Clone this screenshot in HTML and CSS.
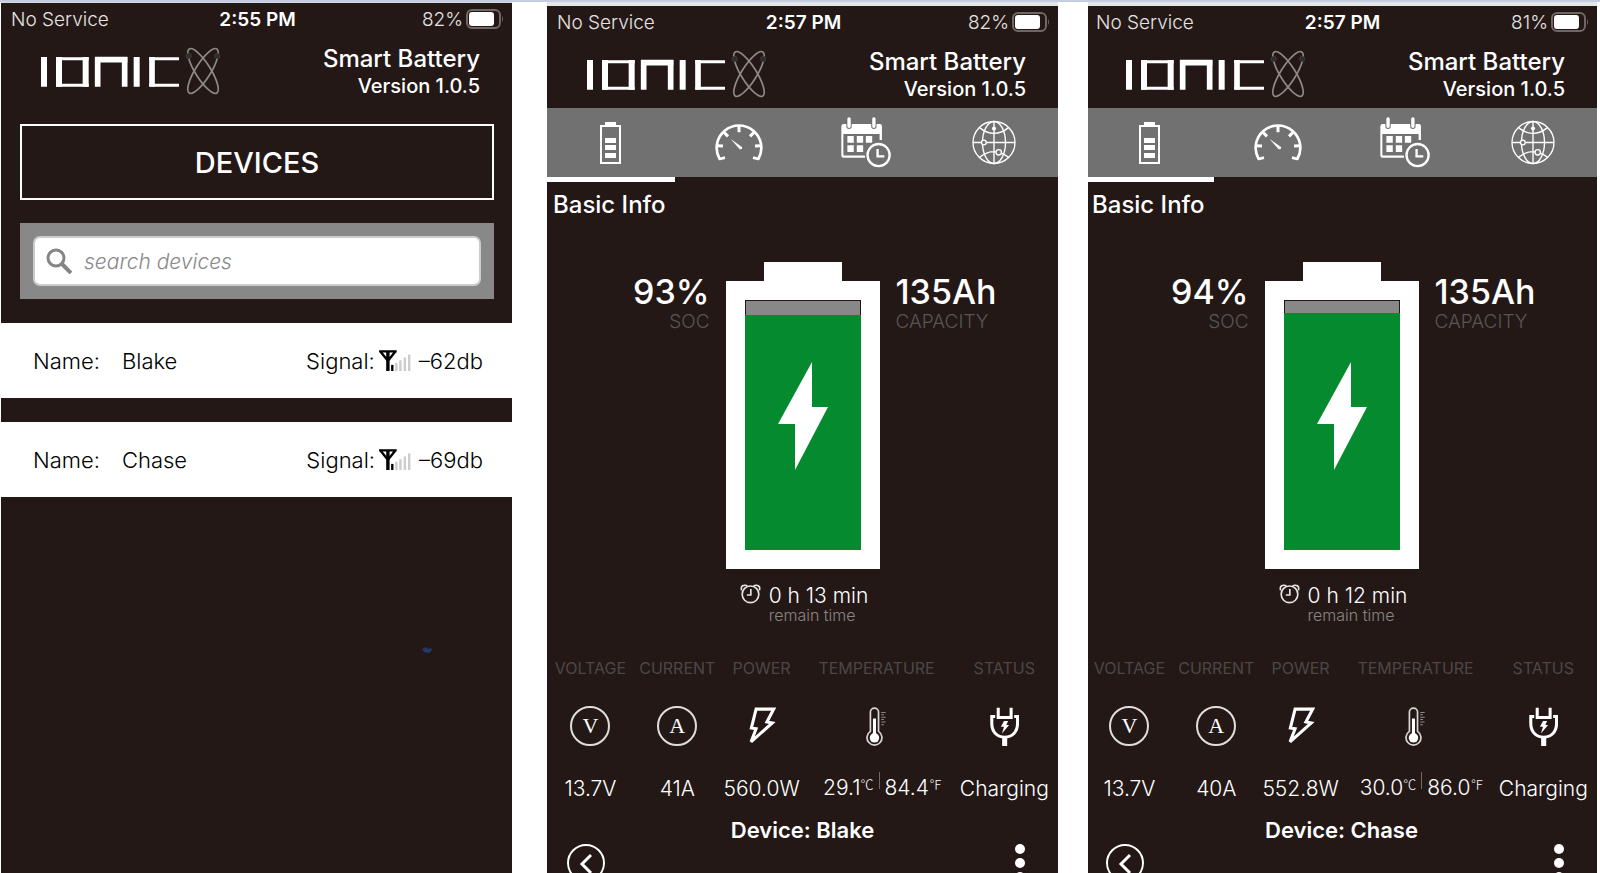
FILE: index.html
```html
<!DOCTYPE html>
<html lang="en">
<head>
    <meta charset="UTF-8">
    <meta name="viewport" content="width=device-width, initial-scale=1.0">
    <title>Ionic Smart Battery</title>
    <link rel="stylesheet" href="styles.css">
</head>
<body>

    <!-- Shared icons -->
    <svg class="sprite" aria-hidden="true">
        <symbol id="i-phone-battery" viewBox="0 0 38 20">
            <rect x="1" y="1" width="33" height="18" rx="5" fill="none" stroke="#6f6866" stroke-width="2"/>
            <rect x="3" y="3" width="25" height="14" rx="3" fill="#fff"/>
            <path d="M36 7q2 3 0 6z" fill="#6f6866"/>
        </symbol>
        <symbol id="i-logo" viewBox="0 0 540 144">
            <g fill="none" stroke="#fff">
                <path d="M12 30v89M290 30v89" stroke-width="18"/>
                <path d="M57 30v89M137 30v89" stroke-width="18"/>
                <path d="M48 35h98M48 115h98" stroke-width="9"/>
                <path d="M173 119V30M254 119V30" stroke-width="17"/>
                <path d="M165 38h97" stroke-width="17"/>
                <path d="M336 30v89" stroke-width="17"/>
                <path d="M328 35h89M328 115h89" stroke-width="9"/>
            </g>
            <g fill="none" stroke="#8f8a88" stroke-width="5">
                <ellipse cx="489" cy="72" rx="23" ry="78" transform="rotate(32 489 72)"/>
                <ellipse cx="489" cy="72" rx="23" ry="78" transform="rotate(-32 489 72)"/>
            </g>
            <circle cx="446" cy="27" r="8" fill="#2e2c2c" stroke="#4a4646" stroke-width="2"/>
            <circle cx="532" cy="27" r="8" fill="#2e2c2c" stroke="#4a4646" stroke-width="2"/>
        </symbol>
        <symbol id="i-search" viewBox="0 0 26 26">
            <circle cx="10" cy="10" r="8" fill="none" stroke="#858585" stroke-width="3"/>
            <path d="M16 16l9 9" stroke="#858585" stroke-width="4"/>
        </symbol>
        <symbol id="i-signal" viewBox="0 0 94 62">
            <path d="M0 4h52M5 6l21 26L47 6" fill="none" stroke="#000" stroke-width="7"/>
            <path d="M26 4v58" stroke="#000" stroke-width="10"/>
            <path d="M39 44v18" stroke="#000" stroke-width="7"/>
            <path d="M51 38v24M63 30v32M76 22v40M89 13v49" stroke="#ccc" stroke-width="7"/>
        </symbol>
        <symbol id="i-battery" viewBox="0 0 21 42">
            <path d="M5 0h11v3h5v39H0V3h5zM2 5v35h17V5z" fill="#fff" fill-rule="evenodd"/>
            <path d="M5 16h11v5H5zM5 23h11v5H5zM5 31h11v5H5z" fill="#fff"/>
        </symbol>
        <symbol id="i-gauge" viewBox="0 0 144 114">
            <path d="M30 101l-16 4A67 67 0 1 1 130 105l-16-4" fill="none" stroke="#fff" stroke-width="8" stroke-linejoin="round"/>
            <path d="M72 5v20M25 23l14 14M119 23l-14 14M6 65l18 1M138 65l-18 1" stroke="#fff" stroke-width="9"/>
            <path d="M47 45l34 24q2 8-7 7z" fill="#fff"/>
        </symbol>
        <symbol id="i-calendar" viewBox="0 0 149 151">
            <path d="M8 20h108q6 0 6 6v42h-7V50H7v62q0 2 2 2h64v7H8q-7 0-7-7V27q0-7 7-7z" fill="#fff"/>
            <path d="M24 5v22M98 5v22" stroke="#717171" stroke-width="16" stroke-linecap="round"/>
            <path d="M24 5v22M98 5v22" stroke="#fff" stroke-width="10" stroke-linecap="round"/>
            <path d="M19 56h19v20H19zM47 56h19v20H47zM74 56h19v20H74zM19 84h19v20H19zM47 84h19v20H47z" fill="#fff"/>
            <circle cx="112" cy="113" r="41" fill="#717171"/>
            <circle cx="112" cy="113" r="33" fill="none" stroke="#fff" stroke-width="7"/>
            <path d="M109 95v22h20" fill="none" stroke="#fff" stroke-width="7"/>
        </symbol>
        <symbol id="i-globe" viewBox="0 0 130 132">
            <g fill="none" stroke="#fff" stroke-width="4">
                <circle cx="65" cy="66" r="62"/>
                <ellipse cx="65" cy="66" rx="34" ry="62"/>
                <path d="M65 4v124M3 66h124M22 22q43 34 86 0M22 110q43-34 86 0"/>
                <circle cx="35" cy="66" r="7" fill="#717171"/>
                <circle cx="79" cy="95" r="8" fill="#717171"/>
            </g>
            <circle cx="65" cy="25" r="6" fill="#fff"/>
        </symbol>
        <symbol id="i-alarm" viewBox="0 0 62 60">
            <g fill="none" stroke="#e6e4e3" stroke-width="5">
                <circle cx="31" cy="31" r="25"/>
                <path d="M4 19Q1 5 12 4q6-1 10 3M58 19Q61 5 50 4q-6-1-10 3"/>
                <path d="M32 15v18H20"/>
            </g>
        </symbol>
        <symbol id="i-power" viewBox="0 0 83 115">
            <path d="M24 6h52L56 44l16 3L9 103l15-39-14-2z" fill="none" stroke="#fff" stroke-width="9"/>
        </symbol>
        <symbol id="i-thermometer" viewBox="0 0 62 115">
            <path d="M13 72V15a12 12 0 0 1 24 0v57a22 22 0 1 1-24 0z" fill="none" stroke="#d8d5d4" stroke-width="5"/>
            <path d="M25 34v56" stroke="#fff" stroke-width="9"/>
            <circle cx="25" cy="91" r="14" fill="#fff"/>
            <path d="M45 16h13M45 23h8M45 30h13M45 37h8M45 44h13M45 52h8" stroke="#8d8886" stroke-width="3"/>
        </symbol>
        <symbol id="i-plug" viewBox="0 0 85 115">
            <g fill="none" stroke="#fff" stroke-width="9">
                <path d="M24 2v29h38V2"/>
                <path d="M15 28H5v20c0 26 16 41 38 41s38-15 38-41V28H71"/>
                <path d="M43 88v27" stroke-width="15"/>
            </g>
            <path d="M41 41h12l-5 12h8L35 78l6-20h-9z" fill="#fff"/>
        </symbol>
        <symbol id="i-bolt" viewBox="0 0 50 108">
            <path d="M34 0v45h16L17 108V62H0z" fill="#fff"/>
        </symbol>
        <symbol id="i-back" viewBox="0 0 38 38">
            <circle cx="19" cy="19" r="18" fill="none" stroke="#fff" stroke-width="2"/>
            <path d="M24 11l-9 9 9 9" fill="none" stroke="#fff" stroke-width="3"/>
        </symbol>
        <symbol id="i-more" viewBox="0 0 10 38">
            <g fill="#fff">
                <circle cx="5" cy="5" r="5"/>
                <circle cx="5" cy="19" r="5"/>
                <circle cx="5" cy="33" r="5"/>
            </g>
        </symbol>
    </svg>

    <main class="screens">

        <!-- Device list -->
        <section class="phone list">
            <div class="status-bar">
                <span>No Service</span>
                <span class="time">2:55 PM</span>
                <span class="charge">82% <svg width="38" height="20"><use href="#i-phone-battery"/></svg></span>
            </div>
            <header class="header">
                <svg class="logo" role="img" aria-label="Ionic" width="180" height="48"><use href="#i-logo"/></svg>
                <div class="app-name">
                    <p class="title">Smart Battery</p>
                    <p class="version">Version 1.0.5</p>
                </div>
            </header>
            <button class="devices-button">DEVICES</button>
            <div class="search">
                <label class="search-box">
                    <svg width="26" height="26" role="img" aria-label="Search"><use href="#i-search"/></svg>
                    <input type="text" placeholder="search devices">
                </label>
            </div>
            <ul class="devices">
                <li class="device">
                    <span class="label">Name:</span>
                    <span class="name">Blake</span>
                    <span>Signal:</span>
                    <svg width="32" height="21"><use href="#i-signal"/></svg>
                    <span>–62db</span>
                </li>
                <li class="device">
                    <span class="label">Name:</span>
                    <span class="name">Chase</span>
                    <span>Signal:</span>
                    <svg width="32" height="21"><use href="#i-signal"/></svg>
                    <span>–69db</span>
                </li>
            </ul>
            <svg class="speck" width="10" height="6" viewBox="0 0 10 6"><path d="M0 2l4-2 2 2 3-1 1 2-3 3-5-1z" fill="#20386b"/></svg>
        </section>

        <!-- Blake -->
        <section class="phone detail">
            <div class="status-bar">
                <span>No Service</span>
                <span class="time">2:57 PM</span>
                <span class="charge">82% <svg width="38" height="20"><use href="#i-phone-battery"/></svg></span>
            </div>
            <header class="header">
                <svg class="logo" role="img" aria-label="Ionic" width="180" height="48"><use href="#i-logo"/></svg>
                <div class="app-name">
                    <p class="title">Smart Battery</p>
                    <p class="version">Version 1.0.5</p>
                </div>
            </header>
            <nav class="tabs">
                <button class="tab active" aria-label="Basic info"><svg width="21" height="42"><use href="#i-battery"/></svg></button>
                <button class="tab" aria-label="Gauges"><svg width="48" height="38"><use href="#i-gauge"/></svg></button>
                <button class="tab" aria-label="History"><svg width="50" height="51"><use href="#i-calendar"/></svg></button>
                <button class="tab" aria-label="Network"><svg width="44" height="45"><use href="#i-globe"/></svg></button>
            </nav>
            <h2 class="section-title">Basic Info</h2>
            <div class="charge-level">
                <div class="readout soc">
                    <p class="figure">93%</p>
                    <p class="caption">SOC</p>
                </div>
                <div class="battery">
                    <div class="cell">
                        <div class="fill" style="height: 94%"></div>
                        <svg class="bolt" width="50" height="108"><use href="#i-bolt"/></svg>
                    </div>
                </div>
                <div class="readout">
                    <p class="figure">135Ah</p>
                    <p class="caption">CAPACITY</p>
                </div>
            </div>
            <div class="remain">
                <svg width="21" height="20"><use href="#i-alarm"/></svg>
                <span class="duration">0 h 13 min</span>
                <span class="remain-label">remain time</span>
            </div>
            <table class="stats">
                <thead>
                    <tr>
                        <th>VOLTAGE</th>
                        <th>CURRENT</th>
                        <th class="narrow">POWER</th>
                        <th class="wide">TEMPERATURE</th>
                        <th class="last">STATUS</th>
                    </tr>
                </thead>
                <tbody>
                    <tr class="icons">
                        <td><span class="unit">V</span></td>
                        <td><span class="unit">A</span></td>
                        <td><svg width="28" height="39"><use href="#i-power"/></svg></td>
                        <td><svg width="21" height="39"><use href="#i-thermometer"/></svg></td>
                        <td><svg width="29" height="39"><use href="#i-plug"/></svg></td>
                    </tr>
                    <tr class="values">
                        <td>13.7V</td>
                        <td>41A</td>
                        <td>560.0W</td>
                        <td><div class="temps"><span>29.1<sup>℃</sup></span><i class="divider"></i><span>84.4<sup>℉</sup></span></div></td>
                        <td>Charging</td>
                    </tr>
                </tbody>
            </table>
            <p class="device-name">Device: Blake</p>
            <footer class="footer">
                <button aria-label="Back"><svg width="38" height="38"><use href="#i-back"/></svg></button>
                <button aria-label="More"><svg width="10" height="38"><use href="#i-more"/></svg></button>
            </footer>
        </section>

        <!-- Chase -->
        <section class="phone detail chase">
            <div class="status-bar">
                <span>No Service</span>
                <span class="time">2:57 PM</span>
                <span class="charge">81% <svg width="38" height="20"><use href="#i-phone-battery"/></svg></span>
            </div>
            <header class="header">
                <svg class="logo" role="img" aria-label="Ionic" width="180" height="48"><use href="#i-logo"/></svg>
                <div class="app-name">
                    <p class="title">Smart Battery</p>
                    <p class="version">Version 1.0.5</p>
                </div>
            </header>
            <nav class="tabs">
                <button class="tab active" aria-label="Basic info"><svg width="21" height="42"><use href="#i-battery"/></svg></button>
                <button class="tab" aria-label="Gauges"><svg width="48" height="38"><use href="#i-gauge"/></svg></button>
                <button class="tab" aria-label="History"><svg width="50" height="51"><use href="#i-calendar"/></svg></button>
                <button class="tab" aria-label="Network"><svg width="44" height="45"><use href="#i-globe"/></svg></button>
            </nav>
            <h2 class="section-title">Basic Info</h2>
            <div class="charge-level">
                <div class="readout soc">
                    <p class="figure">94%</p>
                    <p class="caption">SOC</p>
                </div>
                <div class="battery">
                    <div class="cell">
                        <div class="fill" style="height: 95%"></div>
                        <svg class="bolt" width="50" height="108"><use href="#i-bolt"/></svg>
                    </div>
                </div>
                <div class="readout">
                    <p class="figure">135Ah</p>
                    <p class="caption">CAPACITY</p>
                </div>
            </div>
            <div class="remain">
                <svg width="21" height="20"><use href="#i-alarm"/></svg>
                <span class="duration">0 h 12 min</span>
                <span class="remain-label">remain time</span>
            </div>
            <table class="stats">
                <thead>
                    <tr>
                        <th>VOLTAGE</th>
                        <th>CURRENT</th>
                        <th class="narrow">POWER</th>
                        <th class="wide">TEMPERATURE</th>
                        <th class="last">STATUS</th>
                    </tr>
                </thead>
                <tbody>
                    <tr class="icons">
                        <td><span class="unit">V</span></td>
                        <td><span class="unit">A</span></td>
                        <td><svg width="28" height="39"><use href="#i-power"/></svg></td>
                        <td><svg width="21" height="39"><use href="#i-thermometer"/></svg></td>
                        <td><svg width="29" height="39"><use href="#i-plug"/></svg></td>
                    </tr>
                    <tr class="values">
                        <td>13.7V</td>
                        <td>40A</td>
                        <td>552.8W</td>
                        <td><div class="temps"><span>30.0<sup>℃</sup></span><i class="divider"></i><span>86.0<sup>℉</sup></span></div></td>
                        <td>Charging</td>
                    </tr>
                </tbody>
            </table>
            <p class="device-name">Device: Chase</p>
            <footer class="footer">
                <button aria-label="Back"><svg width="38" height="38"><use href="#i-back"/></svg></button>
                <button aria-label="More"><svg width="10" height="38"><use href="#i-more"/></svg></button>
            </footer>
        </section>

    </main>

</body>
</html>
```
FILE: styles.css
```css
* {
    box-sizing: border-box;
}

body {
    margin: 0;
    background: white;
    font-family: Inter, "Noto Sans CJK SC", sans-serif;
    color: white;
}

p, h2, ul {
    margin: 0;
    padding: 0;
}

button {
    padding: 0;
    border: none;
    background: none;
    color: inherit;
    font-family: inherit;
    cursor: pointer;
}

svg {
    display: block;
    flex: none;
}

.sprite {
    display: none;
}

/* Three phones side by side */
.screens {
    display: flex;
    height: 100vh;
    padding: 0 3px 0 1px;
    border-top: 2px solid #c5cde0;
    overflow: hidden;
}

.phone {
    position: relative;
    flex: 1;
    min-width: 0;
    background: #231816;
    background-clip: padding-box;
}

.list {
    border-top: 1px solid #d8dce2;
}

.detail {
    margin-left: 35px;
    border-top: 4px solid #e5e7e6;
}

.chase {
    margin-left: 28px;
    clip-path: inset(0 0 0 2px);
}

/* Status bar */
.status-bar {
    display: grid;
    grid-template-columns: 1fr auto 1fr;
    align-items: center;
    height: 32px;
    padding: 0 8px 0 10px;
    font-size: 19px;
    font-weight: 300;
    color: #e6e4e3;
}

.time {
    font-weight: 600;
    color: white;
}

.charge {
    display: flex;
    justify-content: flex-end;
    align-items: center;
    gap: 3px;
}

/* Logo and app name */
.header {
    display: flex;
    justify-content: space-between;
    align-items: center;
    height: 70px;
    padding: 2px 32px 0 39px;
}

.app-name {
    text-align: right;
    font-weight: 500;
}

.title {
    font-size: 24px;
    line-height: 30px;
}

.version {
    font-size: 20px;
    line-height: 24px;
}

/* Device list */
.devices-button {
    display: block;
    width: calc(100% - 37px);
    height: 76px;
    margin: 19px 18px 0 19px;
    border: 2px solid white;
    font-size: 29px;
    font-weight: 500;
}

.search {
    height: 76px;
    margin: 23px 18px 24px 19px;
    padding: 13px;
    background: #888;
}

.search-box {
    display: flex;
    align-items: center;
    gap: 12px;
    height: 50px;
    padding: 0 11px;
    border: 2px solid #ccc;
    border-radius: 7px;
    background: white;
}

.search-box input {
    flex: 1;
    min-width: 0;
    padding: 0;
    border: none;
    outline: none;
    background: none;
    font-family: inherit;
    font-size: 21px;
    font-style: italic;
    font-weight: 300;
}

.search-box input::placeholder {
    color: #888;
}

.devices {
    display: grid;
    gap: 24px;
    list-style: none;
}

.device {
    display: flex;
    align-items: center;
    height: 75px;
    padding: 0 29px 0 32px;
    background: white;
    color: black;
    font-size: 22px;
    font-weight: 300;
}

.device .label {
    margin-right: 22px;
}

.device .name {
    flex: 1;
}

.device svg {
    margin: 0 8px 0 4px;
}

.speck {
    position: absolute;
    top: 644px;
    left: 421px;
}

/* Tabs */
.tabs {
    display: grid;
    grid-template-columns: repeat(4, 1fr);
    margin-bottom: 8px;
    background: linear-gradient(#717171 69px, transparent 69px);
}

.tab {
    display: flex;
    justify-content: center;
    align-items: center;
    height: 74px;
    border-bottom: 5px solid transparent;
}

.tab.active {
    border-bottom-color: white;
}

.section-title {
    padding-left: 6px;
    font-size: 24px;
    font-weight: 500;
    line-height: 30px;
}

/* Big battery */
.charge-level {
    display: grid;
    grid-template-columns: 1fr 154px 1fr;
    gap: 16px;
    margin-top: 42px;
}

.readout {
    padding-top: 10px;
}

.soc {
    text-align: right;
}

.figure {
    font-size: 34px;
    font-weight: 500;
    line-height: 40px;
}

.caption {
    font-size: 19px;
    font-weight: 300;
    line-height: 20px;
    color: #5a5554;
}

.battery::before {
    content: "";
    display: block;
    width: 78px;
    height: 19px;
    margin: 0 auto;
    background: white;
}

.cell {
    position: relative;
    display: flex;
    flex-direction: column;
    justify-content: flex-end;
    height: 288px;
    border: 19px solid white;
    background: #888;
    box-shadow: inset 0 0 0 1px #231816;
}

.fill {
    background: #068a30;
}

.bolt {
    position: absolute;
    top: 62px;
    left: 33px;
}

.remain {
    display: grid;
    grid-template-columns: auto auto;
    justify-content: center;
    column-gap: 8px;
    margin-top: 15px;
    padding-left: 3px;
}

.duration {
    font-size: 21px;
    font-weight: 300;
    line-height: 23px;
    color: white;
}

.remain-label {
    grid-column: 2;
    font-size: 16px;
    font-weight: 300;
    line-height: 16px;
    color: #8a8584;
}

/* Readings */
.stats {
    width: 100%;
    margin-top: 33px;
    border-collapse: collapse;
    table-layout: fixed;
    text-align: center;
    white-space: nowrap;
}

.stats th,
.stats td {
    padding: 0;
}

.stats th {
    width: 17%;
    height: 24px;
    font-size: 16px;
    font-weight: 400;
    color: #4c4746;
}

.stats .narrow {
    width: 16%;
}

.stats .wide {
    width: 29%;
}

.stats .last {
    width: 21%;
}

.icons td {
    height: 92px;
}

.icons svg {
    margin: 0 auto;
}

.unit {
    display: flex;
    justify-content: center;
    align-items: center;
    width: 40px;
    height: 40px;
    margin: 0 auto;
    border: 2px solid #e0dddc;
    border-radius: 50%;
    font-family: "Liberation Serif", serif;
    font-size: 22px;
}

.values td {
    height: 32px;
    font-size: 21px;
    font-weight: 300;
    color: white;
}

.temps {
    display: flex;
    justify-content: center;
    padding-left: 12px;
    line-height: 32px;
}

.temps sup {
    font-family: "Noto Sans CJK SC", sans-serif;
    font-size: 13px;
    line-height: 1;
    vertical-align: 6px;
}

.divider {
    width: 1px;
    height: 17px;
    margin: 0 5px;
    background: #6f6866;
}

.device-name {
    margin-top: 12px;
    font-size: 22px;
    font-weight: 600;
    line-height: 28px;
    text-align: center;
}

.footer {
    display: flex;
    justify-content: space-between;
    padding: 0 33px 0 20px;
}
```
